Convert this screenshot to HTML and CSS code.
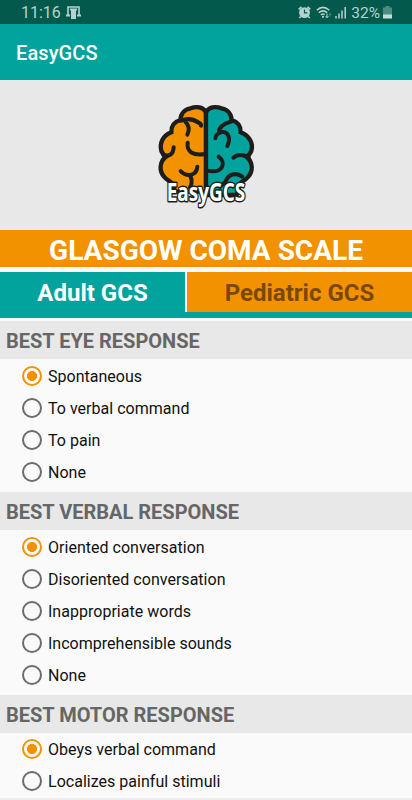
FILE: index.html
```html
<!DOCTYPE html>
<html lang="en">
<head>
    <meta charset="UTF-8">
    <meta name="viewport" content="width=device-width, initial-scale=1.0">
    <title>EasyGCS</title>
    <link rel="stylesheet" href="styles.css">
</head>
<body>
    <div class="status-bar">
        <span class="time">11:16</span>
        <svg class="icon-app" width="15" height="14" viewBox="0 0 15 14">
            <path d="M2 9V1h11v8" fill="none" stroke="#b5d3ce" stroke-width="1.6"/>
            <path d="M0 8.500h4v2H0zM11 8.500h4v2h-4zM4 2.500h7v2h-1V13H5V4.500H4z" fill="#b5d3ce"/>
        </svg>
        <span class="spacer"></span>
        <svg class="icon-alarm" width="13" height="13" viewBox="0 0 13 13">
            <path d="M.7 3.300L3.500.8M12.300 3.300L9.500.8M2.700 10.500L1.300 12M10.300 10.500l1.400 1.500" stroke="#b5d3ce" stroke-width="1.700"/>
            <circle cx="6.500" cy="6.600" r="5.400" fill="#b5d3ce"/>
            <path d="M6.500 3.500v3.400h2.800" fill="none" stroke="#02594c" stroke-width="1.200"/>
        </svg>
        <svg class="icon-wifi" width="16" height="13" viewBox="0 0 16 13">
            <path d="M.7 4.300Q7 -1.500 13.300 4.300M2.800 6.700q4.200-3.700 8.400 0M4.900 9q2.100-1.800 3.800-.2" fill="none" stroke="#b5d3ce" stroke-width="1.500"/>
            <circle cx="7" cy="10.800" r="1.100" fill="#b5d3ce"/>
            <path d="M11 7.500v4M9.600 10l1.400 1.800L12.400 10" fill="none" stroke="#b5d3ce"/>
            <path d="M14 10.500v-3M13 9l1-1.500L15 9" fill="none" stroke="#4d8c83"/>
        </svg>
        <svg class="icon-signal" width="12" height="13" viewBox="0 0 12 13">
            <path d="M1 10v2.500M4 7.500v5M7 4.500v8M10.200 1v11.500" stroke="#b5d3ce" stroke-width="1.500"/>
        </svg>
        <span class="percent">32%</span>
        <svg class="icon-battery" width="9" height="13" viewBox="0 0 9 13">
            <path d="M2.500 0h4v1.500H9V9H0V1.500h2.500z" fill="#4d8c83"/>
            <path d="M0 8.500h9v4H0z" fill="#c9dedb"/>
        </svg>
    </div>

    <header class="app-bar">
        <h1>EasyGCS</h1>
    </header>

    <div class="logo">
        <svg width="130" height="125" viewBox="0 0 390 375">
            <path class="left" d="M198 52C190 36 169 33 152 40C134 43 122 56 121 75C104 80 93 92 94 112C68 122 58 145 64 168C68 177 72 181 77 186C58 201 57 229 73 246C80 255 91 258 95 264L105 290H198Z"/>
            <path class="right" d="M198 52C206 36 227 33 244 40C262 43 274 56 275 75C292 80 303 92 302 112C328 122 341 145 334 168C330 177 326 181 320 186C339 201 340 229 324 246C317 255 306 258 302 264L290 300H198Z"/>
            <g class="folds">
                <path d="M198 48V290"/>
                <path d="M123 77Q151 65 178 84Q184 88 183 92M136 80Q153 95 142 119"/>
                <path d="M70 180Q99 188 101 157"/>
                <path d="M143 143C139 170 160 183 194 177"/>
                <path d="M122 228Q132 240 148 240Q170 239 172 215M148 240Q161 254 150 278"/>
                <path d="M226 130C228 109 260 103 266 125C269 136 266 144 262 153M238 115Q232 91 275 79"/>
                <path d="M280 188Q297 173 326 187"/>
                <path d="M236 185C260 203 249 237 201 227"/>
                <path d="M257 259C265 237 288 231 307 245M257 259L240 275"/>
            </g>
            <text x="80" y="317" textLength="236" lengthAdjust="spacingAndGlyphs">EasyGCS</text>
        </svg>
    </div>

    <h2 class="title">GLASGOW COMA SCALE</h2>

    <div class="tabs">
        <div class="tab active">Adult GCS</div>
        <div class="tab">Pediatric GCS</div>
    </div>

    <section>
        <h3>BEST EYE RESPONSE</h3>
        <label><input type="radio" name="eye" checked>Spontaneous</label>
        <label><input type="radio" name="eye">To verbal command</label>
        <label><input type="radio" name="eye">To pain</label>
        <label><input type="radio" name="eye">None</label>
    </section>

    <section>
        <h3>BEST VERBAL RESPONSE</h3>
        <label><input type="radio" name="verbal" checked>Oriented conversation</label>
        <label><input type="radio" name="verbal">Disoriented conversation</label>
        <label><input type="radio" name="verbal">Inappropriate words</label>
        <label><input type="radio" name="verbal">Incomprehensible sounds</label>
        <label><input type="radio" name="verbal">None</label>
    </section>

    <section class="motor">
        <h3>BEST MOTOR RESPONSE</h3>
        <label><input type="radio" name="motor" checked>Obeys verbal command</label>
        <label><input type="radio" name="motor">Localizes painful stimuli</label>
    </section>
    <div class="footer-line"></div>
</body>
</html>
```
FILE: styles.css
```css
* { box-sizing: border-box; }
body { font-family: Roboto, sans-serif; background: #fafafa; margin: 0; height: 800px; overflow: hidden; }
h1, h2, h3 { margin: 0; }

.status-bar { display: flex; align-items: center; height: 24px; padding: 1px 20px 0 21px; background: #02594c; color: #b5d3ce; font-size: 16px; }
.spacer { flex: 1; }
.icon-app { margin-left: 5px; }
.icon-wifi { margin-left: 5px; }
.icon-signal { margin-left: 3px; }
.percent { margin: 0 3px 0 4px; font-size: 15.5px; }

.app-bar { display: flex; align-items: center; height: 56px; padding: 2px 16px 0; background: #01a39c; color: #fff; }
.app-bar h1 { font-size: 20px; font-weight: 500; letter-spacing: 0.1px; }

.logo { display: flex; justify-content: center; height: 150px; padding: 15px 2px 0 0; background: #e8e8e8; }
.left { fill: #f39200; stroke: #1d1d1b; stroke-width: 13; }
.right { fill: #01a39c; stroke: #1d1d1b; stroke-width: 13; }
.folds { fill: none; stroke: #1d1d1b; stroke-width: 12; stroke-linecap: round; }
.logo text { font: bold 74px "Open Sans", sans-serif; fill: #fff; stroke: #1d1d1b; stroke-width: 9; stroke-linejoin: round; paint-order: stroke; }

.title { height: 37px; background: #f39200; color: #fff; font-size: 28px; line-height: 41px; text-align: center; }

.tabs { display: flex; height: 46px; margin: 4.500px 0 3.500px; padding-bottom: 6px; background: #01a39c; }
.tab { flex: 1; background: #f39200; color: #7a4900; font-size: 24px; font-weight: bold; line-height: 43px; text-align: center; }
.tab.active { flex: 0 0 187px; border-right: 2px solid #fafafa; background: #01a39c; color: #fff; }

section { margin-bottom: 4px; }
h3 { height: 38px; margin-bottom: 1px; padding-left: 6px; background: #e8e8e8; color: #666; font-size: 20px; line-height: 41px; }
label { display: flex; align-items: center; height: 32px; padding-left: 22px; color: #111; font-size: 16px; letter-spacing: 0.02px; }
input { appearance: none; width: 20px; height: 20px; margin: 0 6px 0 0; border: 2px solid #6b6b6b; border-radius: 50%; }
input:checked { border-color: #f39200; background: radial-gradient(circle, #f39200 4.800px, transparent 5.300px); }
.motor { margin-bottom: 1px; }
.motor h3 { margin-bottom: 0; }
.footer-line { height: 4px; background: #eee; }
```
